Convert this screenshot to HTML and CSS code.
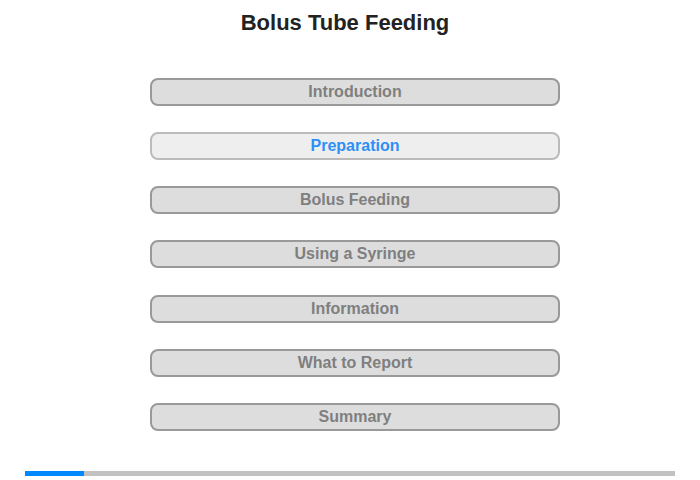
FILE: index.html
```html
<!DOCTYPE html>
<html>
<head>
<meta charset="utf-8">
<link rel="stylesheet" href="styles.css">
</head>
<body>
<div class="page">
  <h1 class="title">Bolus Tube Feeding</h1>
  <nav class="menu">
    <div class="item">Introduction</div>
    <div class="item active">Preparation</div>
    <div class="item">Bolus Feeding</div>
    <div class="item">Using a Syringe</div>
    <div class="item">Information</div>
    <div class="item">What to Report</div>
    <div class="item">Summary</div>
  </nav>
  <div class="progress"><div class="progress-fill" style="width:59px"></div></div>
</div>
</body>
</html>
```

FILE: styles.css
```css
html, body {
  margin: 0;
  padding: 0;
  background: #fff;
}
.page {
  width: 700px;
  height: 480px;
  font-family: "Liberation Sans", Arial, sans-serif;
  display: flex;
  flex-direction: column;
  align-items: center;
}
.title {
  margin: 10px 10px 0 0;
  font-size: 22px;
  line-height: 26px;
  font-weight: bold;
  color: #222;
}
.menu {
  margin: 42px 0 0 10px;
  display: flex;
  flex-direction: column;
  gap: 26.16px;
}
.item {
  box-sizing: border-box;
  width: 410px;
  height: 28px;
  border: 2px solid #999;
  border-radius: 8px;
  background: #ddd;
  color: #7f7f7f;
  font-size: 16px;
  font-weight: bold;
  line-height: 24px;
  text-align: center;
}
.item.active {
  border-color: #bbb;
  background: #eee;
  color: #2e90f5;
}
.progress {
  margin-top: 40.04px;
  width: 650px;
  height: 5px;
  background: #c2c2c2;
}
.progress-fill {
  height: 100%;
  background: #0088ff;
}
```
